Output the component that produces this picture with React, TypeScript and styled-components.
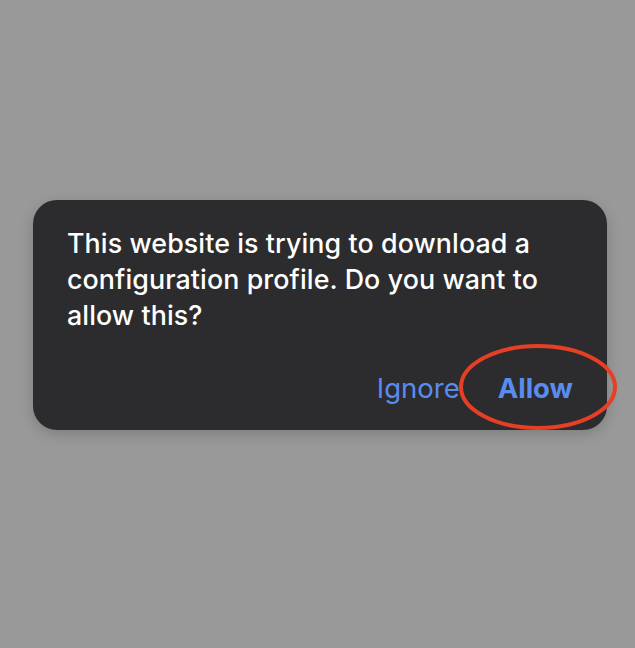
import React from "react";
import styled, { createGlobalStyle } from "styled-components";

const GlobalStyle = createGlobalStyle`
    html, body {
        margin: 0;
        padding: 0;
        background: #999999;
    }
    body {
        font-family: Inter, "Noto Sans", "Liberation Sans", sans-serif;
    }
`;

const Page = styled.div`
    width: 635px;
    height: 648px;
    box-sizing: border-box;
    padding: 200px 28px 0 33px;
`;

const Dialog = styled.div`
    position: relative;
    width: 574px;
    height: 230px;
    box-sizing: border-box;
    padding: 25px 30px 0 34px;
    background: #2c2c2e;
    border-radius: 24px;
    box-shadow: 0 4px 14px rgba(0, 0, 0, 0.18);
    display: flex;
    flex-direction: column;
`;

const Message = styled.p`
    margin: 0;
    color: #ffffff;
    font-size: 26.8px;
    line-height: 36px;
    font-weight: 500;
    letter-spacing: 0.1px;
`;

const Actions = styled.div`
    display: flex;
    justify-content: flex-end;
    align-items: center;
    gap: 38px;
    margin-top: 37px;
    padding-right: 4px;
`;

const ActionButton = styled.span<{ $bold?: boolean }>`
    color: #5a8cf0;
    font-size: 27.5px;
    line-height: 36px;
    font-weight: ${({ $bold }) => ($bold ? 700 : 400)};
`;

const Highlight = styled.svg`
    position: absolute;
    left: 425px;
    top: 143px;
    overflow: visible;
`;

export default function App() {
    return (
        <>
            <GlobalStyle />
            <Page>
                <Dialog>
                    <Message>
                        This website is trying to download a configuration profile. Do you want to allow this?
                    </Message>
                    <Actions>
                        <ActionButton>Ignore</ActionButton>
                        <ActionButton $bold>Allow</ActionButton>
                    </Actions>
                    <Highlight width="160" height="88" viewBox="0 0 160 88">
                        <ellipse cx="80" cy="44" rx="77" ry="41" fill="none" stroke="#e63f26" strokeWidth="4" />
                    </Highlight>
                </Dialog>
            </Page>
        </>
    );
}
